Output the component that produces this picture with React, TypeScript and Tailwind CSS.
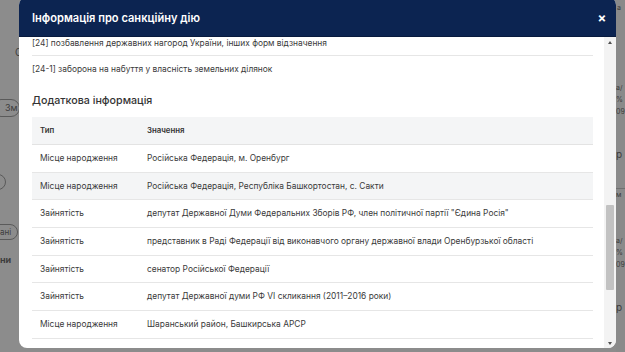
import React from "react";

const rows: { t: string; v: string; grey?: boolean }[] = [
  { t: "Місце народження", v: "Російська Федерація, м. Оренбург" },
  { t: "Місце народження", v: "Російська Федерація, Республіка Башкортостан, с. Сакти", grey: true },
  { t: "Зайнятість", v: "депутат Державної Думи Федеральних Зборів РФ, член політичної партії \"Єдина Росія\"" },
  { t: "Зайнятість", v: "представник в Раді Федерації від виконавчого органу державної влади Оренбурзької області" },
  { t: "Зайнятість", v: "сенатор Російської Федерації" },
  { t: "Зайнятість", v: "депутат Державної думи РФ VI скликання (2011–2016 роки)" },
  { t: "Місце народження", v: "Шаранський район, Башкирська АРСР" },
];

export default function App() {
  return (
    <div
      className="relative w-[625px] h-[352px] overflow-hidden bg-[#8c8c8c]"
      style={{ fontFamily: "Inter, 'Noto Sans', sans-serif" }}
    >
      {/* faded page behind */}
      <div className="flex h-full justify-between">
        <div className="w-[19px] flex flex-col text-[10px] text-[#3c3c3c]">
          <div className="h-[45px]" />
          <div className="pl-[15px] leading-[14px]">С</div>
          <div className="h-[40px]" />
          <div className="ml-[-8px] w-[28px] h-[18px] rounded-full border border-[#5a5a5a] pl-[12px] text-[9px] leading-[16px]">Зм</div>
          <div className="h-[57px]" />
          <div className="ml-[-10px] w-[16px] h-[16px] rounded-full border border-[#5a5a5a]" />
          <div className="h-[34px]" />
          <div className="ml-[-10px] w-[28px] h-[16px] rounded-full border border-[#5a5a5a] pl-[9px] text-[8px] leading-[14px]">ані</div>
          <div className="h-[14px]" />
          <div className="text-[9px] font-bold leading-[12px]">ни</div>
        </div>
        <div className="w-[9px] flex flex-col text-[7px] text-[#3c3c3c] leading-[12px] bg-[#8a8a8a] overflow-hidden">
          <div className="pl-[1px] pt-[2px]">а</div>
          <div className="h-[68px]" />
          <div>a/</div>
          <div>%</div>
          <div>09</div>
          <div className="h-[30px]" />
          <div className="text-[10px]">р</div>
          <div className="h-[28px]" />
          <div className="border-t border-[#707070]">м</div>
          <div className="h-[34px]" />
          <div>a/</div>
          <div>%</div>
          <div>09</div>
          <div className="h-[30px]" />
          <div className="text-[10px]">р</div>
        </div>
      </div>

      {/* modal */}
      <div className="absolute left-[19px] top-[-3px] w-[597px] h-[351px] rounded-[8px] overflow-hidden bg-white flex flex-col">
        <div className="h-[40px] shrink-0 bg-[#0c2451] flex items-center justify-between pl-[13px] pr-[8px] pt-[3px] border-b border-[#081a3d]">
          <div className="text-white text-[11.1px] font-semibold">Інформація про санкційну дію</div>
          <div className="text-white text-[13px] font-bold leading-none w-[12px] text-center">×</div>
        </div>
        <div className="flex flex-1 min-h-0">
          <div className="flex-1 pl-[13px] pr-[11px] text-[#3a3a3a]">
            <div className="h-[19px] flex items-center pb-[5px] text-[8.4px] border-b border-[#e6e6e6]">
              [24] позбавлення державних нагород України, інших форм відзначення
            </div>
            <div className="h-[27px] flex items-center text-[8.4px]">
              [24-1] заборона на набуття у власність земельних ділянок
            </div>
            <div className="h-[34px] flex items-center pt-[3px] text-[10.7px] font-medium text-[#333]">
              Додаткова інформація
            </div>
            <div className="flex flex-col">
              <div className="h-[28px] flex items-center bg-[#f4f5f6] border-b border-[#e3e3e3] text-[7.8px] font-semibold text-[#333]">
                <div className="w-[115px] pl-[8px]">Тип</div>
                <div>Значення</div>
              </div>
              {rows.map((r, i) => (
                <div
                  key={i}
                  className={`h-[27.7px] flex items-center border-b border-[#e6e6e6] text-[8.4px] ${r.grey ? "bg-[#f4f5f6]" : "bg-white"}`}
                >
                  <div className="w-[115px] pl-[8px] whitespace-nowrap">{r.t}</div>
                  <div className="whitespace-nowrap">{r.v}</div>
                </div>
              ))}
            </div>
          </div>
          {/* scrollbar */}
          <div className="w-[12px] shrink-0 bg-[#f3f3f3] flex flex-col items-center">
            <div className="h-[10px] flex items-center justify-center">
              <div className="w-0 h-0 border-l-[2.5px] border-r-[2.5px] border-b-[3px] border-l-transparent border-r-transparent border-b-[#505050]" />
            </div>
            <div className="h-[158px]" />
            <div className="w-[8px] h-[85px] bg-[#c2c2c2] rounded-[1px]" />
            <div className="flex-1" />
            <div className="h-[10px] flex items-center justify-center">
              <div className="w-0 h-0 border-l-[2.5px] border-r-[2.5px] border-t-[3px] border-l-transparent border-r-transparent border-t-[#505050]" />
            </div>
          </div>
        </div>
      </div>
    </div>
  );
}
